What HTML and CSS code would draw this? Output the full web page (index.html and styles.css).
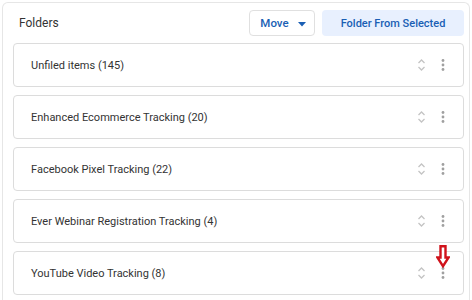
FILE: index.html
```html
<!DOCTYPE html>
<html>
<head>
<meta charset="utf-8">
<link rel="stylesheet" href="styles.css">
</head>
<body>
<div class="panel">
  <div class="header">
    <div class="title">Folders</div>
    <div class="actions">
      <button class="btn btn-move">Move <svg class="caret" width="8" height="5" viewBox="0 0 8 5"><path d="M0 0h8L4 4.5z" fill="#1a5fb4"/></svg></button>
      <button class="btn btn-primary">Folder From Selected</button>
    </div>
  </div>
  <div class="list">
    <div class="card"><span class="name">Unfiled items (145)</span><span class="tools"><svg class="sort" width="9" height="14" viewBox="0 0 9 14"><path d="M1.5 5L4.5 2 7.5 5M1.5 9L4.5 12 7.5 9" fill="none" stroke="#c4c4c4" stroke-width="1.3"/></svg><svg class="more" width="4" height="14" viewBox="0 0 4 14"><circle cx="2" cy="2.5" r="1.4" fill="#a0a0a0"/><circle cx="2" cy="7" r="1.4" fill="#a0a0a0"/><circle cx="2" cy="11.5" r="1.4" fill="#a0a0a0"/></svg></span></div>
    <div class="card"><span class="name">Enhanced Ecommerce Tracking (20)</span><span class="tools"><svg class="sort" width="9" height="14" viewBox="0 0 9 14"><path d="M1.5 5L4.5 2 7.5 5M1.5 9L4.5 12 7.5 9" fill="none" stroke="#c4c4c4" stroke-width="1.3"/></svg><svg class="more" width="4" height="14" viewBox="0 0 4 14"><circle cx="2" cy="2.5" r="1.4" fill="#a0a0a0"/><circle cx="2" cy="7" r="1.4" fill="#a0a0a0"/><circle cx="2" cy="11.5" r="1.4" fill="#a0a0a0"/></svg></span></div>
    <div class="card"><span class="name">Facebook Pixel Tracking (22)</span><span class="tools"><svg class="sort" width="9" height="14" viewBox="0 0 9 14"><path d="M1.5 5L4.5 2 7.5 5M1.5 9L4.5 12 7.5 9" fill="none" stroke="#c4c4c4" stroke-width="1.3"/></svg><svg class="more" width="4" height="14" viewBox="0 0 4 14"><circle cx="2" cy="2.5" r="1.4" fill="#a0a0a0"/><circle cx="2" cy="7" r="1.4" fill="#a0a0a0"/><circle cx="2" cy="11.5" r="1.4" fill="#a0a0a0"/></svg></span></div>
    <div class="card"><span class="name">Ever Webinar Registration Tracking (4)</span><span class="tools"><svg class="sort" width="9" height="14" viewBox="0 0 9 14"><path d="M1.5 5L4.5 2 7.5 5M1.5 9L4.5 12 7.5 9" fill="none" stroke="#c4c4c4" stroke-width="1.3"/></svg><svg class="more" width="4" height="14" viewBox="0 0 4 14"><circle cx="2" cy="2.5" r="1.4" fill="#a0a0a0"/><circle cx="2" cy="7" r="1.4" fill="#a0a0a0"/><circle cx="2" cy="11.5" r="1.4" fill="#a0a0a0"/></svg></span></div>
    <div class="card"><span class="name">YouTube Video Tracking (8)</span><span class="tools"><svg class="sort" width="9" height="14" viewBox="0 0 9 14"><path d="M1.5 5L4.5 2 7.5 5M1.5 9L4.5 12 7.5 9" fill="none" stroke="#c4c4c4" stroke-width="1.3"/></svg><span class="more-wrap"><svg class="more" width="4" height="14" viewBox="0 0 4 14"><circle cx="2" cy="2.5" r="1.4" fill="#a0a0a0"/><circle cx="2" cy="7" r="1.4" fill="#a0a0a0"/><circle cx="2" cy="11.5" r="1.4" fill="#a0a0a0"/></svg><svg class="arrow" width="14" height="23" viewBox="0 0 14 23"><path d="M4.5 1.2H9.5V12.5H12.6L7 21.2 1.4 12.5H4.5Z" fill="#fff" stroke="#d0121b" stroke-width="2.4" stroke-linejoin="miter"/></svg></span></span></div>
  </div>
</div>
</body>
</html>
```

FILE: styles.css
```css
html, body {
  margin: 0;
  padding: 0;
  background: #ffffff;
}
body {
  width: 472px;
  height: 300px;
  overflow: hidden;
  font-family: Roboto, "Liberation Sans", sans-serif;
  color: #3c4043;
}
.panel {
  margin: 2px 2px 0 2px;
  border: 1px solid #e6e6e6;
  border-bottom: none;
  border-radius: 6px 6px 0 0;
  padding: 7px 5px 0 10px;
  height: 300px;
  box-sizing: border-box;
}
.header {
  display: flex;
  align-items: center;
  justify-content: space-between;
  height: 26px;
  margin-bottom: 7px;
}
.title {
  font-size: 12px;
  padding-left: 6px;
  color: #333;
}
.actions {
  display: flex;
  gap: 7px;
}
.btn {
  font-family: Roboto, "Liberation Sans", sans-serif;
  font-size: 11px;
  font-weight: 500;
  height: 26px;
  border-radius: 4px;
  color: #1a5fb4;
  cursor: pointer;
  display: flex;
  align-items: center;
  justify-content: center;
}
.btn-move {
  width: 66px;
  background: #fff;
  border: 1px solid #e0e0e0;
  gap: 9px;
  padding: 0 0 0 2px;
  font-size: 11.5px;
}
.caret {
  margin-top: 2px;
}
.btn-primary {
  width: 142px;
  background: #e8f0fe;
  border: none;
}
.list {
  display: flex;
  flex-direction: column;
  gap: 8px;
}
.card {
  height: 44px;
  box-sizing: border-box;
  border: 1px solid #dcdcdc;
  border-radius: 4px;
  display: flex;
  align-items: center;
  justify-content: space-between;
  padding: 0 18px 0 17px;
}
.name {
  font-size: 11px;
  color: #333;
}
.tools {
  display: flex;
  align-items: center;
  gap: 15px;
}
.more-wrap {
  position: relative;
  display: flex;
}
.arrow {
  position: absolute;
  left: -5px;
  top: -21px;
}
```
